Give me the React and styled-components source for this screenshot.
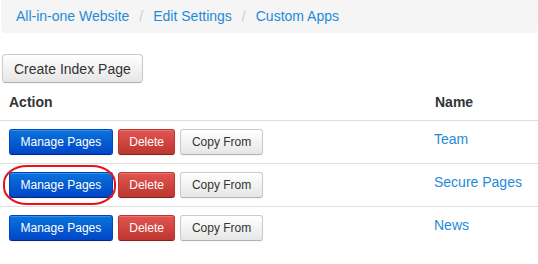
import React from "react";
import styled, { createGlobalStyle, css } from "styled-components";

const GlobalStyle = createGlobalStyle`
  body {
    margin: 0;
    background: #ffffff;
    font-family: "Liberation Sans", Arial, sans-serif;
    font-size: 14px;
    color: #333333;
  }
`;

const Page = styled.div`
  width: 538px;
`;

const Breadcrumb = styled.ol`
  display: flex;
  align-items: center;
  list-style: none;
  margin: 0 0 0 1px;
  padding: 6px 15px 7px;
  height: 20px;
  line-height: 20px;
  background: #f5f5f5;
  border-radius: 0 0 4px 4px;
`;

const Crumb = styled.li`
  color: #1f8ad8;
  & + &:before {
    content: "/";
    color: #cccccc;
    padding: 0 10px;
  }
`;

const Toolbar = styled.div`
  padding: 21px 0 0 2px;
`;

const BigButton = styled.button`
  font-family: inherit;
  font-size: 14px;
  line-height: 20px;
  height: 29px;
  padding: 0 11px;
  color: #333333;
  border: 1px solid #cccccc;
  border-bottom-color: #b3b3b3;
  border-radius: 4px;
  background: linear-gradient(#ffffff, #e6e6e6);
  box-shadow: inset 0 1px 0 rgba(255, 255, 255, 0.2), 0 1px 2px rgba(0, 0, 0, 0.05);
`;

const Table = styled.table`
  width: 538px;
  border-collapse: collapse;
  th, td {
    text-align: left;
    vertical-align: top;
    line-height: 20px;
    padding: 8px;
  }
  th {
    font-weight: bold;
    padding: 9px 8px 8px 9px;
    border-bottom: 1px solid #dddddd;
  }
  tbody tr + tr td {
    border-top: 1px solid #dddddd;
  }
`;

const NameCell = styled.td`
  width: 96px;
  color: #1f8ad8;
`;

const Actions = styled.div`
  display: flex;
  gap: 5px;
  padding-left: 1px;
`;

const variants = {
  primary: css`
    color: #ffffff;
    background: linear-gradient(#0a74db, #0046c8);
    border-color: #0044cc #0044cc #002a80;
  `,
  danger: css`
    color: #ffffff;
    background: linear-gradient(#e25551, #bd362f);
    border-color: #bd362f #bd362f #802420;
  `,
  plain: css`
    color: #333333;
    background: linear-gradient(#ffffff, #e6e6e6);
    border-color: #cccccc #cccccc #b3b3b3;
  `,
};

const SmallButton = styled.button`
  font-family: inherit;
  font-size: 12px;
  line-height: 18px;
  height: 26px;
  padding: 0 10.5px;
  border: 1px solid;
  border-radius: 3px;
  box-shadow: inset 0 1px 0 rgba(255, 255, 255, 0.2), 0 1px 2px rgba(0, 0, 0, 0.05);
  ${(p) => variants[p.$variant]}
`;

const Marked = styled.span`
  position: relative;
  display: inline-flex;
`;

const Circle = styled.span`
  position: absolute;
  left: -6px;
  right: -3px;
  top: -7px;
  bottom: -7px;
  border: 2px solid #e5141c;
  border-radius: 24px / 18px;
  pointer-events: none;
`;

const rows = [
  { name: "Team" },
  { name: "Secure Pages", marked: true },
  { name: "News" },
];

export default function App() {
  return (
    <Page>
      <GlobalStyle />
      <Breadcrumb>
        <Crumb>All-in-one Website</Crumb>
        <Crumb>Edit Settings</Crumb>
        <Crumb>Custom Apps</Crumb>
      </Breadcrumb>
      <Toolbar>
        <BigButton>Create Index Page</BigButton>
      </Toolbar>
      <Table>
        <thead>
          <tr>
            <th>Action</th>
            <th>Name</th>
          </tr>
        </thead>
        <tbody>
          {rows.map((r) => (
            <tr key={r.name}>
              <td>
                <Actions>
                  {r.marked ? (
                    <Marked>
                      <SmallButton $variant="primary">Manage Pages</SmallButton>
                      <Circle />
                    </Marked>
                  ) : (
                    <SmallButton $variant="primary">Manage Pages</SmallButton>
                  )}
                  <SmallButton $variant="danger">Delete</SmallButton>
                  <SmallButton $variant="plain">Copy From</SmallButton>
                </Actions>
              </td>
              <NameCell>{r.name}</NameCell>
            </tr>
          ))}
        </tbody>
      </Table>
    </Page>
  );
}
